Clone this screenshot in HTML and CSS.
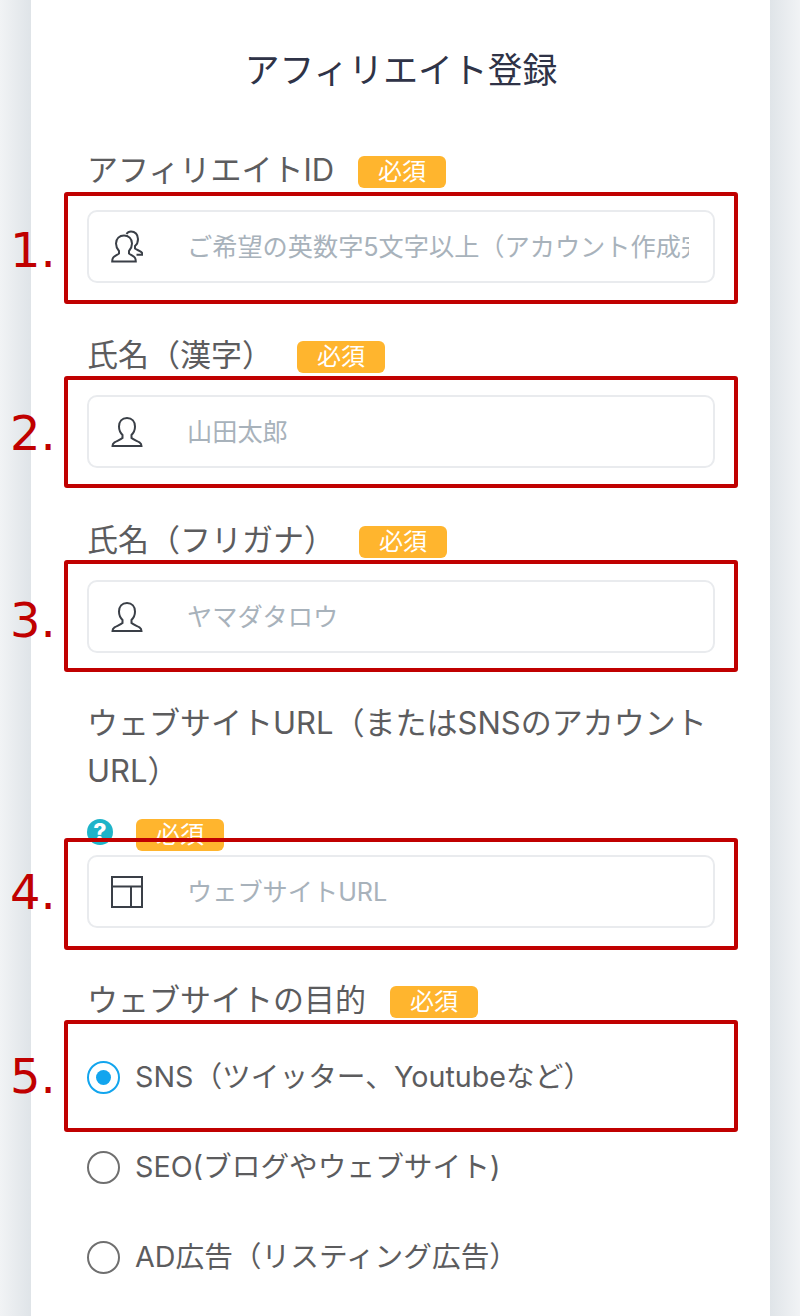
FILE: index.html
```html
<!DOCTYPE html>
<html lang="ja">
<head>
<meta charset="utf-8">
<title>アフィリエイト登録</title>
<link rel="stylesheet" href="styles.css">
</head>
<body>
<div class="page">
  <form class="card">
    <h1 class="title">アフィリエイト登録</h1>

    <div class="field">
      <label class="label">アフィリエイトID<span class="badge">必須</span></label>
      <div class="input-box">
        <svg class="icon" viewBox="0 0 32 36"><path d="M13 6.500c-4.500 0-8 3-8 8 0 3 1.300 5.500 3 7.500v2.500C6 26 3.300 27 2.200 28.500c-.7 1-1 2.500-1 4h23.600c0-1.500-.3-3-1-4-1.100-1.500-3.800-2.500-5.800-4V22c1.700-2 3-4.500 3-7.500 0-5-3.500-8-8-8z"/><path d="M15.500 5C16.500 3.300 18.300 2.500 20 2.500c4 0 7 3 7 7.500 0 3-1 5.500-3 7v2.500c1.500 1.200 4 2 6 3.300 1 .7 1.500 1.700 1.500 3h-6"/></svg>
        <input class="text-input" type="text" placeholder="ご希望の英数字5文字以上（アカウント作成完了後に変更はできません）">
      </div>
    </div>

    <div class="field">
      <label class="label">氏名（漢字）<span class="badge">必須</span></label>
      <div class="input-box">
        <svg class="icon" viewBox="0 0 32 36"><path d="M16 4c-5 0-8 3.500-8 8.500 0 3.500 1.500 6.500 3.500 8.500v3c-1.800 1.600-5.800 3-8 4.300C2 29.200 1.500 30.300 1.500 32h29c0-1.700-.5-2.800-2-3.700-2.200-1.300-6.200-2.700-8-4.300v-3c2-2 3.500-5 3.500-8.500C24 7.500 21 4 16 4z"/></svg>
        <input class="text-input" type="text" placeholder="山田太郎">
      </div>
    </div>

    <div class="field">
      <label class="label">氏名（フリガナ）<span class="badge">必須</span></label>
      <div class="input-box">
        <svg class="icon" viewBox="0 0 32 36"><path d="M16 4c-5 0-8 3.500-8 8.500 0 3.500 1.500 6.500 3.500 8.500v3c-1.800 1.600-5.800 3-8 4.300C2 29.200 1.500 30.300 1.500 32h29c0-1.700-.5-2.800-2-3.700-2.200-1.300-6.200-2.700-8-4.300v-3c2-2 3.500-5 3.500-8.500C24 7.500 21 4 16 4z"/></svg>
        <input class="text-input" type="text" placeholder="ヤマダタロウ">
      </div>
    </div>

    <div class="field">
      <label class="label label-long">ウェブサイトURL（またはSNSのアカウントURL）</label>
      <div class="label-extra">
        <span class="help">?</span><span class="badge badge-after-help">必須</span>
      </div>
      <div class="input-box input-box-tight">
        <svg class="icon" viewBox="0 0 32 36"><path d="M1 3h30v30H1zM1 12.500h30M20 12.500V33"/></svg>
        <input class="text-input" type="text" placeholder="ウェブサイトURL">
      </div>
    </div>

    <div class="field">
      <label class="label label-radio">ウェブサイトの目的<span class="badge">必須</span></label>
      <div class="radios">
        <div class="radio-row"><span class="radio checked"></span>SNS（ツイッター、Youtubeなど）</div>
        <div class="radio-row"><span class="radio"></span>SEO(ブログやウェブサイト)</div>
        <div class="radio-row"><span class="radio"></span>AD広告（リスティング広告）</div>
      </div>
    </div>
  </form>

  <!-- 注釈の赤枠と番号 -->
  <div class="mark mark-1"></div><span class="num num-1">1.</span>
  <div class="mark mark-2"></div><span class="num num-2">2.</span>
  <div class="mark mark-3"></div><span class="num num-3">3.</span>
  <div class="mark mark-4"></div><span class="num num-4">4.</span>
  <div class="mark mark-5"></div><span class="num num-5">5.</span>
</div>
</body>
</html>
```

FILE: styles.css
```css
* { box-sizing: border-box; }

html, body { margin: 0; padding: 0; }

body {
  font-family: "Inter", "Noto Sans CJK JP", sans-serif;
  color: #5c5c5e;
}

.page {
  position: relative;
  height: 1316px;
  overflow: hidden;
  padding: 0 30px 0 31px;
  background: linear-gradient(90deg, #f1f3f5 0, #dfe4e8 31px, #dfe4e8 769px, #f1f3f5 800px);
}

.card {
  height: 1316px;
  padding: 0 55px 0 56px;
  background: #fff;
}

.title {
  margin: 0;
  padding-top: 46px;
  height: 146px;
  font-size: 34.8px;
  line-height: 48px;
  font-weight: 400;
  text-align: center;
  color: #2f3347;
}

.field { margin-bottom: 48px; }

.label {
  display: block;
  margin-bottom: 16px;
  font-size: 31px;
  line-height: 48px;
}

.label-long { margin-top: -2px; margin-bottom: 24px; }

.label-radio { margin-bottom: 8px; }

.badge {
  display: inline-block;
  width: 88px;
  height: 32px;
  margin-left: 24px;
  border-radius: 6px;
  background: #ffb52e;
  color: #fff;
  font-size: 24px;
  line-height: 32px;
  text-align: center;
  vertical-align: 1px;
}

.label-extra {
  display: flex;
  align-items: flex-start;
  height: 32px;
}

.help {
  width: 26px;
  height: 26px;
  border-radius: 50%;
  background: #1eb4c9;
  color: #fff;
  font-size: 23px;
  font-weight: 800;
  line-height: 26px;
  text-align: center;
}

.badge-after-help { margin-left: 23px; vertical-align: 0; }

.input-box {
  display: flex;
  align-items: center;
  width: 628px;
  height: 73px;
  padding: 0 24px 0 22px;
  border: 2px solid #e9ebee;
  border-radius: 10px;
  background: #fff;
}

.input-box-tight { margin-top: 4px; }

.icon {
  flex: none;
  width: 32px;
  height: 36px;
  fill: none;
  stroke: #3a3f47;
  stroke-width: 2;
}

.text-input {
  flex: 1;
  min-width: 0;
  margin-left: 44px;
  padding: 0;
  border: 0;
  outline: 0;
  background: none;
  font: 25.2px "Inter", "Noto Sans CJK JP", sans-serif;
}

.text-input::placeholder { color: #a8b2bb; opacity: 1; }

.radio-row {
  display: flex;
  align-items: center;
  height: 90px;
  font-size: 28.7px;
  line-height: 40px;
}

.radio {
  flex: none;
  width: 33px;
  height: 33px;
  margin-right: 15px;
  border: 2px solid #6f6f6f;
  border-radius: 50%;
}

.radio.checked {
  position: relative;
  border-color: #12a5ee;
}

.radio.checked::after {
  content: "";
  position: absolute;
  top: 7px;
  left: 7px;
  width: 15px;
  height: 15px;
  border-radius: 50%;
  background: #12a5ee;
}

/* annotations drawn on top of the form */
.mark {
  position: absolute;
  left: 64px;
  width: 674px;
  border: 4px solid #c00000;
  border-radius: 3px;
}

.mark-1 { top: 192px; height: 112px; }
.mark-2 { top: 376px; height: 112px; }
.mark-3 { top: 560px; height: 112px; }
.mark-4 { top: 838px; height: 112px; }
.mark-5 { top: 1020px; height: 112px; }

.num {
  position: absolute;
  left: 10px;
  color: #c00000;
  font-family: "DejaVu Sans", sans-serif;
  font-size: 48px;
  line-height: 60px;
}

.num-1 { top: 220px; }
.num-2 { top: 403px; }
.num-3 { top: 590px; }
.num-4 { top: 862px; }
.num-5 { top: 1046px; }
```
